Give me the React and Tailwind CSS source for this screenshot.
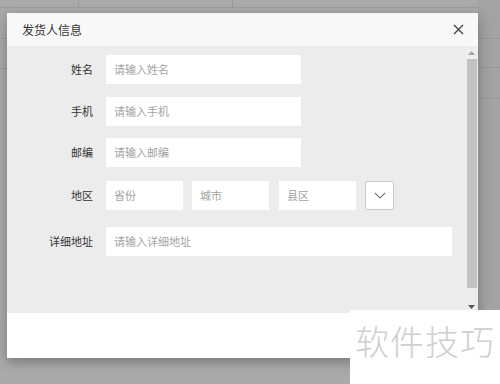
import React from 'react';

const font = { fontFamily: '"Microsoft YaHei", "Noto Sans CJK SC", "Noto Sans", sans-serif' };

function Field({ placeholder, className }) {
  return (
    <div className={`h-[29px] bg-white flex items-center pl-[8px] text-[11px] text-[#a3a3a3] ${className}`}>
      {placeholder}
    </div>
  );
}

function Row({ label, children, className = '' }) {
  return (
    <div className={`flex items-center ${className}`}>
      <div className="w-[86px] text-right text-[11px] text-[#333]">{label}</div>
      <div className="ml-[13px] flex items-center">{children}</div>
    </div>
  );
}

export default function App() {
  return (
    <div className="relative w-[500px] h-[384px] overflow-hidden bg-[#aaaaaa]" style={font}>
      {/* page behind the overlay */}
      <div className="absolute inset-0">
        <div className="absolute left-0 right-0 top-[7px] h-px bg-[#9c9c9c]" />
        <div className="absolute left-[78px] top-0 h-[7px] w-px bg-[#9c9c9c]" />
        <div className="absolute left-[232px] top-0 h-[7px] w-px bg-[#9c9c9c]" />
        <div className="absolute left-[478px] right-0 top-0 bottom-0 bg-[#a3a3a3]" />
        <div className="absolute left-0 w-[7px] top-[38px] h-px bg-[#9c9c9c]" />
        <div className="absolute left-0 w-[7px] top-[68px] h-px bg-[#9c9c9c]" />
        <div className="absolute left-[478px] right-0 top-[38px] h-px bg-[#999]" />
        <div className="absolute left-[478px] right-0 top-[67px] h-px bg-[#999]" />
        <div className="absolute left-[478px] right-0 top-[98px] h-px bg-[#999]" />
      </div>

      {/* dialog */}
      <div className="absolute left-[7px] top-[13px] w-[471px] flex flex-col shadow-[0_4px_12px_rgba(0,0,0,0.3)]">
        <div className="h-[33px] bg-[#f8f8f8] flex items-center justify-between pl-[15px] pr-[14px]">
          <span className="text-[12px] text-[#333]">发货人信息</span>
          <svg width="11" height="11" viewBox="0 0 11 11" className="text-[#444]">
            <path d="M1 1L10 10M10 1L1 10" stroke="currentColor" strokeWidth="1.4" />
          </svg>
        </div>

        <div className="h-[267px] bg-[#ececec] flex">
          <div className="flex-1 pt-[9px] flex flex-col">
            <Row label="姓名"><Field placeholder="请输入姓名" className="w-[195px]" /></Row>
            <Row label="手机" className="mt-[13px]"><Field placeholder="请输入手机" className="w-[195px]" /></Row>
            <Row label="邮编" className="mt-[12px]"><Field placeholder="请输入邮编" className="w-[195px]" /></Row>
            <Row label="地区" className="mt-[14px]">
              <Field placeholder="省份" className="w-[77px]" />
              <Field placeholder="城市" className="w-[77px] ml-[9px]" />
              <Field placeholder="县区" className="w-[77px] ml-[10px]" />
              <div className="ml-[9px] w-[29px] h-[29px] bg-white border border-[#c8c8c8] rounded-[2px] flex items-center justify-center">
                <svg width="12" height="7" viewBox="0 0 12 7">
                  <path d="M1 1L6 6L11 1" fill="none" stroke="#777" strokeWidth="1.1" />
                </svg>
              </div>
            </Row>
            <Row label="详细地址" className="mt-[17px]"><Field placeholder="请输入详细地址" className="w-[346px]" /></Row>
          </div>

          {/* scrollbar */}
          <div className="w-[11px] mr-[1px] bg-[#ededed] flex flex-col items-center">
            <div className="h-[13px] flex items-center justify-center">
              <svg width="7" height="4" viewBox="0 0 7 4"><path d="M0 4L3.5 0L7 4Z" fill="#a3a3a3" /></svg>
            </div>
            <div className="w-[10px] h-[229px] bg-[#c2c2c2]" />
            <div className="flex-1" />
            <div className="h-[13px] flex items-center justify-center">
              <svg width="7" height="4" viewBox="0 0 7 4"><path d="M0 0L3.5 4L7 0Z" fill="#555" /></svg>
            </div>
          </div>
        </div>

        <div className="h-[45px] bg-white" />
      </div>

      {/* watermark */}
      <div className="absolute left-[350px] top-[310px] right-0 bottom-0 bg-white flex items-start justify-center pt-[14px]">
        <span className="text-[34px] leading-none tracking-[1px] text-[#cfcfcf]" style={{ fontFamily: '"Noto Sans CJK SC", sans-serif', fontWeight: 300 }}>软件技巧</span>
      </div>
    </div>
  );
}
